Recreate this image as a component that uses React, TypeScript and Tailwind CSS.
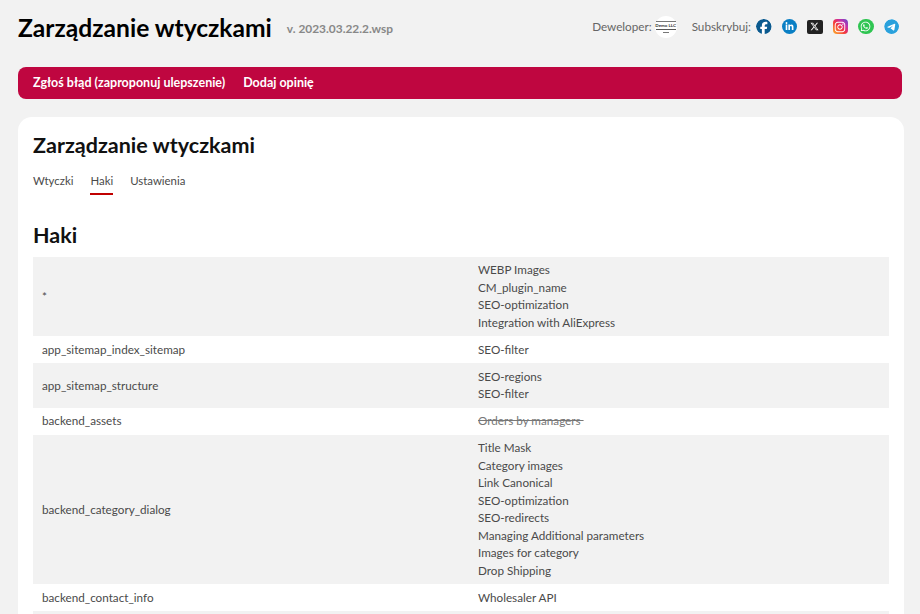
import { FaFacebook, FaLinkedinIn, FaXTwitter, FaInstagram, FaWhatsapp, FaTelegram } from 'react-icons/fa6';

interface HookRow {
  name: string;
  plugins: string[];
  disabled?: boolean;
}

const HOOKS: HookRow[] = [
  { name: '*', plugins: ['WEBP Images', 'CM_plugin_name', 'SEO-optimization', 'Integration with AliExpress'] },
  { name: 'app_sitemap_index_sitemap', plugins: ['SEO-filter'] },
  { name: 'app_sitemap_structure', plugins: ['SEO-regions', 'SEO-filter'] },
  { name: 'backend_assets', plugins: ['Orders by managers\u00a0'], disabled: true },
  {
    name: 'backend_category_dialog',
    plugins: [
      'Title Mask',
      'Category images',
      'Link Canonical',
      'SEO-optimization',
      'SEO-redirects',
      'Managing Additional parameters',
      'Images for category',
      'Drop Shipping',
    ],
  },
  { name: 'backend_contact_info', plugins: ['Wholesaler API'] },
];

export default function App() {
  return (
    <div className="h-[614px] overflow-hidden bg-[#f2f2f2] px-[18px] font-['Lato','Liberation_Sans',sans-serif] text-[11.7px] leading-[17.5px] text-[#4a4a4a]">
      {/* Header */}
      <header className="flex h-[67px] items-center justify-between pb-[12px] pr-[3px]">
        <div className="flex items-center">
          <h1 className="text-[24.6px] font-bold leading-[30px] text-black">Zarządzanie wtyczkami</h1>
          <span className="ml-[15px] mt-[2px] text-[11.9px] font-bold text-[#888]">v. 2023.03.22.2.wsp</span>
        </div>
        <div className="flex items-center pb-[2px] text-[#666]">
          <span className="text-[11.7px]">Deweloper:</span>
          <div className="ml-[3px] flex h-[22px] w-[22px] flex-col items-center justify-center rounded-full bg-white">
            <div className="h-[1px] w-[20px] bg-[#777]" />
            <span className="text-[4.5px] font-bold leading-[7px] text-[#333]">Demo LLC</span>
            <div className="h-[1px] w-[20px] bg-[#555]" />
            <div className="mt-[2px] h-[1px] w-[6px] bg-[#777]" />
          </div>
          <span className="ml-[15px] text-[11.7px]">Subskrybuj:</span>
          <div className="ml-[5px] flex items-center gap-[10px]">
            <FaFacebook className="h-[15.5px] w-[15.5px] rounded-full bg-white text-[#0b5a8f]" />
            <div className="flex h-[15.5px] w-[15.5px] items-center justify-center rounded-full bg-[#0a7fc4]">
              <FaLinkedinIn className="h-[9px] w-[9px] text-white" />
            </div>
            <div className="flex h-[14px] w-[15.5px] items-center justify-center rounded-[2px] bg-[#222]">
              <FaXTwitter className="h-[9px] w-[9px] text-white" />
            </div>
            <div className="flex h-[15.5px] w-[15.5px] items-center justify-center rounded-[4px] bg-[linear-gradient(45deg,#fdb52a,#f3353f_45%,#c72fa8_70%,#5a4fd0)]">
              <FaInstagram className="h-[12px] w-[12px] text-white" />
            </div>
            <div className="flex h-[15.5px] w-[15.5px] items-center justify-center rounded-full bg-[#2fc552]">
              <FaWhatsapp className="h-[11px] w-[11px] text-white" />
            </div>
            <FaTelegram className="h-[15.5px] w-[15.5px] rounded-full bg-white text-[#2aa1dc]" />
          </div>
        </div>
      </header>

      {/* Red bar */}
      <nav className="flex h-[32px] items-center gap-[18px] rounded-[8px] bg-[#bf0640] px-[15px] text-[12.5px] font-bold text-white">
        <a>Zgłoś błąd (zaproponuj ulepszenie)</a>
        <a>Dodaj opinię</a>
      </nav>

      {/* Main card */}
      <main className="-mr-[2px] mt-[18px] rounded-t-[14px] bg-white px-[15px] pt-[14px]">
        <h2 className="text-[21.5px] font-bold leading-[28px] text-[#111]">Zarządzanie wtyczkami</h2>
        <div className="mt-[13px] flex gap-[17px] text-[11.4px]">
          <a className="pb-[3px]">Wtyczki</a>
          <a className="border-b-[2px] border-[#c00000] pb-[3px]">Haki</a>
          <a className="pb-[3px]">Ustawienia</a>
        </div>
        <h3 className="mt-[26px] text-[21.5px] font-bold leading-[28px] text-[#111]">Haki</h3>
        <table className="mt-[8px] w-full border-collapse">
          <tbody>
            {HOOKS.map((row, i) => (
              <tr key={row.name} className={i % 2 === 0 ? 'bg-[#f2f2f2]' : 'bg-white'}>
                <td className="w-[436px] px-[9px] py-[4.75px] align-middle">{row.name}</td>
                <td className="px-[9px] py-[4.75px] align-middle">
                  {row.plugins.map(p => (
                    <div key={p} className={row.disabled ? 'text-[#777] line-through' : ''}>{p}</div>
                  ))}
                </td>
              </tr>
            ))}
            <tr className="bg-[#f2f2f2]">
              <td colSpan={2} className="h-[3px]" />
            </tr>
          </tbody>
        </table>
      </main>
    </div>
  );
}
